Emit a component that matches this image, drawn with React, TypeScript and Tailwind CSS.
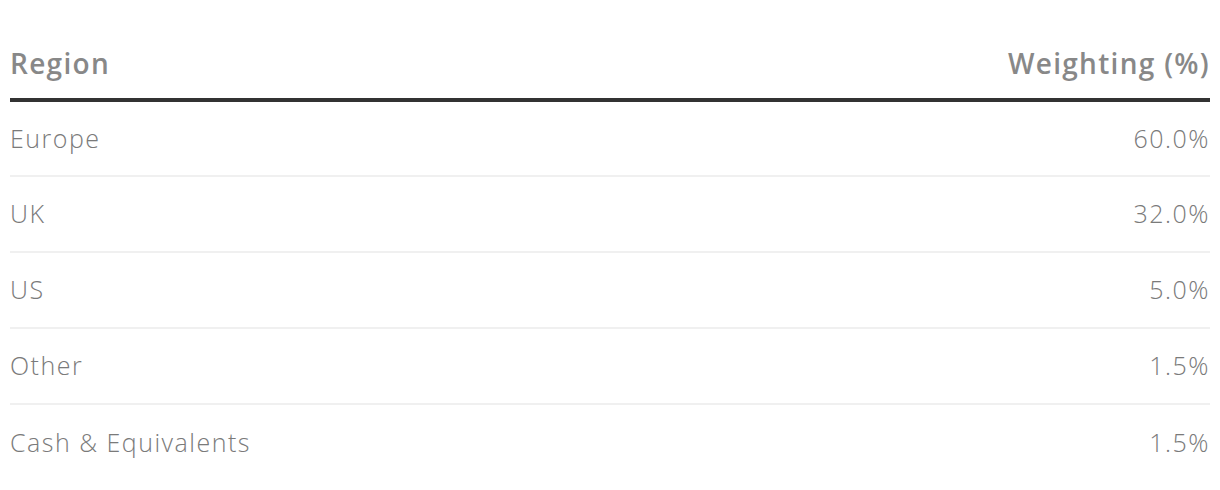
import React from "react";

const rows = [
  { region: "Europe", weight: "60.0%" },
  { region: "UK", weight: "32.0%" },
  { region: "US", weight: "5.0%" },
  { region: "Other", weight: "1.5%" },
  { region: "Cash & Equivalents", weight: "1.5%" },
];

export default function App() {
  return (
    <div className="w-[1220px] h-[490px] bg-white px-[10px] font-['Open_Sans',sans-serif]">
      <table className="w-full border-collapse">
        <thead>
          <tr className="border-b-4 border-[#333333]">
            <th className="h-[100px] pt-[28px] text-left text-[28px] font-semibold tracking-[1.3px] text-[#888888] align-middle">
              Region
            </th>
            <th className="h-[100px] pt-[28px] text-right text-[28px] font-semibold tracking-[1.3px] text-[#888888] align-middle">
              Weighting (%)
            </th>
          </tr>
        </thead>
        <tbody>
          {rows.map((r, i) => (
            <tr
              key={r.region}
              className={i < rows.length - 1 ? "border-b-2 border-[#f0f0f0]" : ""}
            >
              <td className="h-[76px] text-left text-[25px] font-light tracking-[1.5px] text-[#7a7a7a]">
                {r.region}
              </td>
              <td className="h-[76px] text-right text-[25px] font-light tracking-[1.5px] text-[#7a7a7a]">
                {r.weight}
              </td>
            </tr>
          ))}
        </tbody>
      </table>
    </div>
  );
}
